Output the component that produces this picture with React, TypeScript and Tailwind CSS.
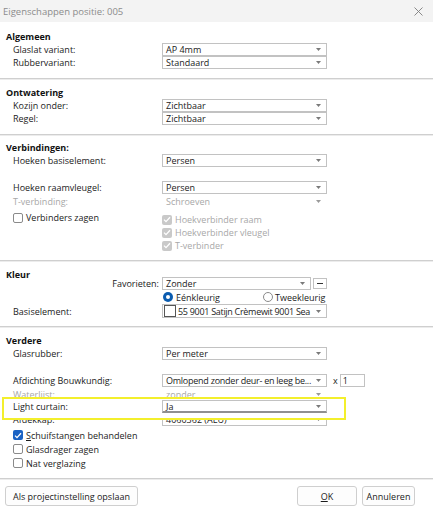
import React from "react";

const Arrow = ({ c = "#7a7a7a" }: { c?: string }) => (
  <svg width="5" height="3" viewBox="0 0 5 3" className="shrink-0">
    <path d="M0 0 L5 0 L2.5 3 Z" fill={c} />
  </svg>
);

function Select({
  value,
  disabled,
  className = "w-[165px]",
  textClass = "",
  bottom,
  children,
}: {
  value?: string;
  disabled?: boolean;
  className?: string;
  textClass?: string;
  bottom?: boolean;
  children?: React.ReactNode;
}) {
  return (
    <div
      className={
        "flex h-[13px] items-center justify-between pl-[3px] pr-[5px] bg-white overflow-hidden " +
        (disabled ? "border border-transparent text-[#a8a8a8] " : "border border-[#c2c2c2] text-[#1b1b1b] ") +
        (bottom ? "border-b-2 border-b-[#8f8f8f] " : "") +
        className
      }
    >
      <div className={"flex items-center gap-[3px] whitespace-nowrap leading-[11px] " + textClass}>
        {children}
        {value}
      </div>
      <Arrow c={disabled ? "#9a9a9a" : "#7a7a7a"} />
    </div>
  );
}

function Row({
  label,
  disabled,
  children,
  h = "h-[13px]",
}: {
  label: string;
  disabled?: boolean;
  children: React.ReactNode;
  h?: string;
}) {
  return (
    <div className={"flex items-center " + h}>
      <div className={"w-[162px] pl-[13px] whitespace-nowrap " + (disabled ? "text-[#a8a8a8]" : "text-[#1b1b1b]")}>
        {label}
      </div>
      {children}
    </div>
  );
}

function Heading({ children }: { children: React.ReactNode }) {
  return <div className="h-[13px] leading-[13px] pl-[6px] font-bold text-[#111]">{children}</div>;
}

function Sep() {
  return (
    <div className="flex flex-col">
      <div className="h-[1px] bg-[#cfcfcf]" />
      <div className="h-[1px] bg-[#ececec]" />
    </div>
  );
}

function Check({ checked, disabled }: { checked?: boolean; disabled?: boolean }) {
  if (checked) {
    return (
      <div
        className={
          "w-[10px] h-[10px] rounded-[2px] flex items-center justify-center shrink-0 " +
          (disabled ? "bg-[#c9c9c9]" : "bg-[#1a62c4]")
        }
      >
        <svg width="8" height="7" viewBox="0 0 8 7">
          <path d="M1 3.6 L3 5.6 L7 1.2" stroke="white" strokeWidth="1.3" fill="none" />
        </svg>
      </div>
    );
  }
  return <div className="w-[10px] h-[10px] rounded-[2px] border border-[#8a8a8a] bg-white shrink-0" />;
}

function CheckRow({
  label,
  checked,
  disabled,
  underline,
}: {
  label: string;
  checked?: boolean;
  disabled?: boolean;
  underline?: boolean;
}) {
  return (
    <div className="flex items-center h-[14px] gap-[3px]">
      <Check checked={checked} disabled={disabled} />
      <span className={"whitespace-nowrap " + (disabled ? "text-[#a8a8a8]" : "text-[#1b1b1b]")}>
        {underline ? (
          <>
            <span className="underline">{label[0]}</span>
            {label.slice(1)}
          </>
        ) : (
          label
        )}
      </span>
    </div>
  );
}

function CheckRow13(props: { label: string; checked?: boolean; disabled?: boolean }) {
  return (
    <div className="flex items-center h-[13px] gap-[3px]">
      <Check checked={props.checked} disabled={props.disabled} />
      <span className={"whitespace-nowrap " + (props.disabled ? "text-[#a8a8a8]" : "text-[#1b1b1b]")}>
        {props.label}
      </span>
    </div>
  );
}

export default function App() {
  return (
    <div className="w-[433px] h-[512px] bg-white overflow-hidden font-['Open_Sans',sans-serif] text-[9px] leading-[13px] text-[#1b1b1b]">
      {/* Title bar */}
      <div className="h-[22px] bg-[#f3f3f3] flex items-center justify-between pl-[3px] pr-[10px]">
        <span className="text-[#8c8c8c] text-[9.5px]">Eigenschappen positie: 005</span>
        <svg width="9" height="9" viewBox="0 0 9 9">
          <path d="M0.5 0.5 L8.5 8.5 M8.5 0.5 L0.5 8.5" stroke="#7d7d7d" strokeWidth="0.9" />
        </svg>
      </div>

      {/* Algemeen */}
      <div className="pt-[8px] pb-[9px]">
        <Heading>Algemeen</Heading>
        <Row label="Glaslat variant:">
          <Select value="AP 4mm" />
        </Row>
        <Row label="Rubbervariant:">
          <Select value="Standaard" />
        </Row>
      </div>
      <Sep />

      {/* Ontwatering */}
      <div className="pt-[6px] pb-[9px]">
        <Heading>Ontwatering</Heading>
        <Row label="Kozijn onder:">
          <Select value="Zichtbaar" />
        </Row>
        <Row label="Regel:">
          <Select value="Zichtbaar" />
        </Row>
      </div>
      <Sep />

      {/* Verbindingen */}
      <div className="pt-[5px] pb-[8px]">
        <Heading>Verbindingen:</Heading>
        <Row label="Hoeken basiselement:">
          <Select value="Persen" />
        </Row>
        <div className="mt-[14px]">
          <Row label="Hoeken raamvleugel:">
            <Select value="Persen" />
          </Row>
        </div>
        <div className="mt-[1px]">
          <Row label="T-verbinding:" disabled>
            <Select value="Schroeven" disabled />
          </Row>
        </div>
        <div className="flex mt-[5px]">
          <div className="w-[162px] pl-[13px] -mt-[2px]">
            <CheckRow13 label="Verbinders zagen" />
          </div>
          <div className="flex flex-col">
            <CheckRow13 label="Hoekverbinder raam" checked disabled />
            <CheckRow13 label="Hoekverbinder vleugel" checked disabled />
            <CheckRow13 label="T-verbinder" checked disabled />
          </div>
        </div>
      </div>
      <Sep />

      {/* Kleur */}
      <div className="pt-[6px] pb-[8px]">
        <Heading>Kleur</Heading>
        <div className="flex items-center h-[13px] -mt-[4px]">
          <div className="w-[162px] pr-[3px] text-right whitespace-nowrap">Favorieten:</div>
          <Select value="Zonder" className="w-[149px]" />
          <div className="ml-[2px] w-[14px] h-[11px] border border-[#c2c2c2] flex items-center justify-center">
            <div className="w-[6px] h-[1.5px] bg-[#333]" />
          </div>
        </div>
        <div className="flex items-center h-[14px] pl-[163px]">
          <div className="flex items-center gap-[3px] w-[100px]">
            <div className="w-[10px] h-[10px] rounded-full bg-[#0a5cb0] flex items-center justify-center">
              <div className="w-[4px] h-[4px] rounded-full bg-white" />
            </div>
            <span>Eénkleurig</span>
          </div>
          <div className="flex items-center gap-[2px]">
            <div className="w-[10px] h-[10px] rounded-full border border-[#8a8a8a]" />
            <span>Tweekleurig</span>
          </div>
        </div>
        <Row label="Basiselement:" h="h-[14px]">
          <div className="flex h-[14px] w-[165px] items-center justify-between border border-[#c2c2c2] pl-[1px] pr-[5px]">
            <div className="flex items-center gap-[2px] whitespace-nowrap text-[9px] tracking-[-0.3px]">
              <div className="w-[12px] h-[12px] border border-[#555] bg-white shrink-0" />
              <span>55 9001 Satijn Crèmewit 9001 Sea</span>
            </div>
            <Arrow />
          </div>
        </Row>
      </div>
      <Sep />

      {/* Verdere */}
      <div className="pt-[6px] pb-[8px]">
        <Heading>Verdere</Heading>
        <Row label="Glasrubber:">
          <Select value="Per meter" />
        </Row>
        <div className="mt-[14px]">
          <Row label="Afdichting Bouwkundig:">
            <Select value="Omlopend zonder deur- en leeg be..." textClass="tracking-[-0.25px]" />
            <span className="ml-[6px] mr-[2px]">x</span>
            <div className="h-[13px] w-[25px] border border-[#c2c2c2] pl-[2px] leading-[11px]">1</div>
          </Row>
        </div>
        <div className="mt-[1px]">
          <Row label="Waterlijst:" disabled>
            <Select value="zonder" disabled />
          </Row>
        </div>
        {/* Light curtain row, pasted over with highlight */}
        <div className="relative h-[12px]">
          <div className="absolute left-[2px] top-[-4px] w-[344px] h-[23px] border-2 border-[#f3ef2c] bg-white">
            <div className="flex items-center h-[13px] mt-[1px]">
              <div className="w-[158px] pl-[9px] whitespace-nowrap">Light curtain:</div>
              <Select value="Ja" bottom />
            </div>
          </div>
        </div>
        <Row label="Afdekkap:">
          <Select value="4060362 (ALU)" />
        </Row>
        <div className="pl-[13px] mt-[2px]">
          <CheckRow label="Schuifstangen behandelen" checked underline />
          <CheckRow label="Glasdrager zagen" />
          <CheckRow label="Nat verglazing" />
        </div>
      </div>
      <Sep />

      {/* Buttons */}
      <div className="flex items-center justify-between pt-[6px] pl-[5px] pr-[18px]">
        <button className="h-[20px] w-[133px] border border-[#cfcfcf] rounded-[3px] bg-[#fdfdfd] text-[9px]">
          Als projectinstelling opslaan
        </button>
        <div className="flex gap-[5px]">
          <button className="h-[20px] w-[60px] border border-[#cfcfcf] rounded-[3px] bg-[#fdfdfd] text-[9px]">
            <span className="underline">O</span>K
          </button>
          <button className="h-[20px] w-[53px] border border-[#cfcfcf] rounded-[3px] bg-[#fdfdfd] text-[9px]">
            Annuleren
          </button>
        </div>
      </div>
    </div>
  );
}
